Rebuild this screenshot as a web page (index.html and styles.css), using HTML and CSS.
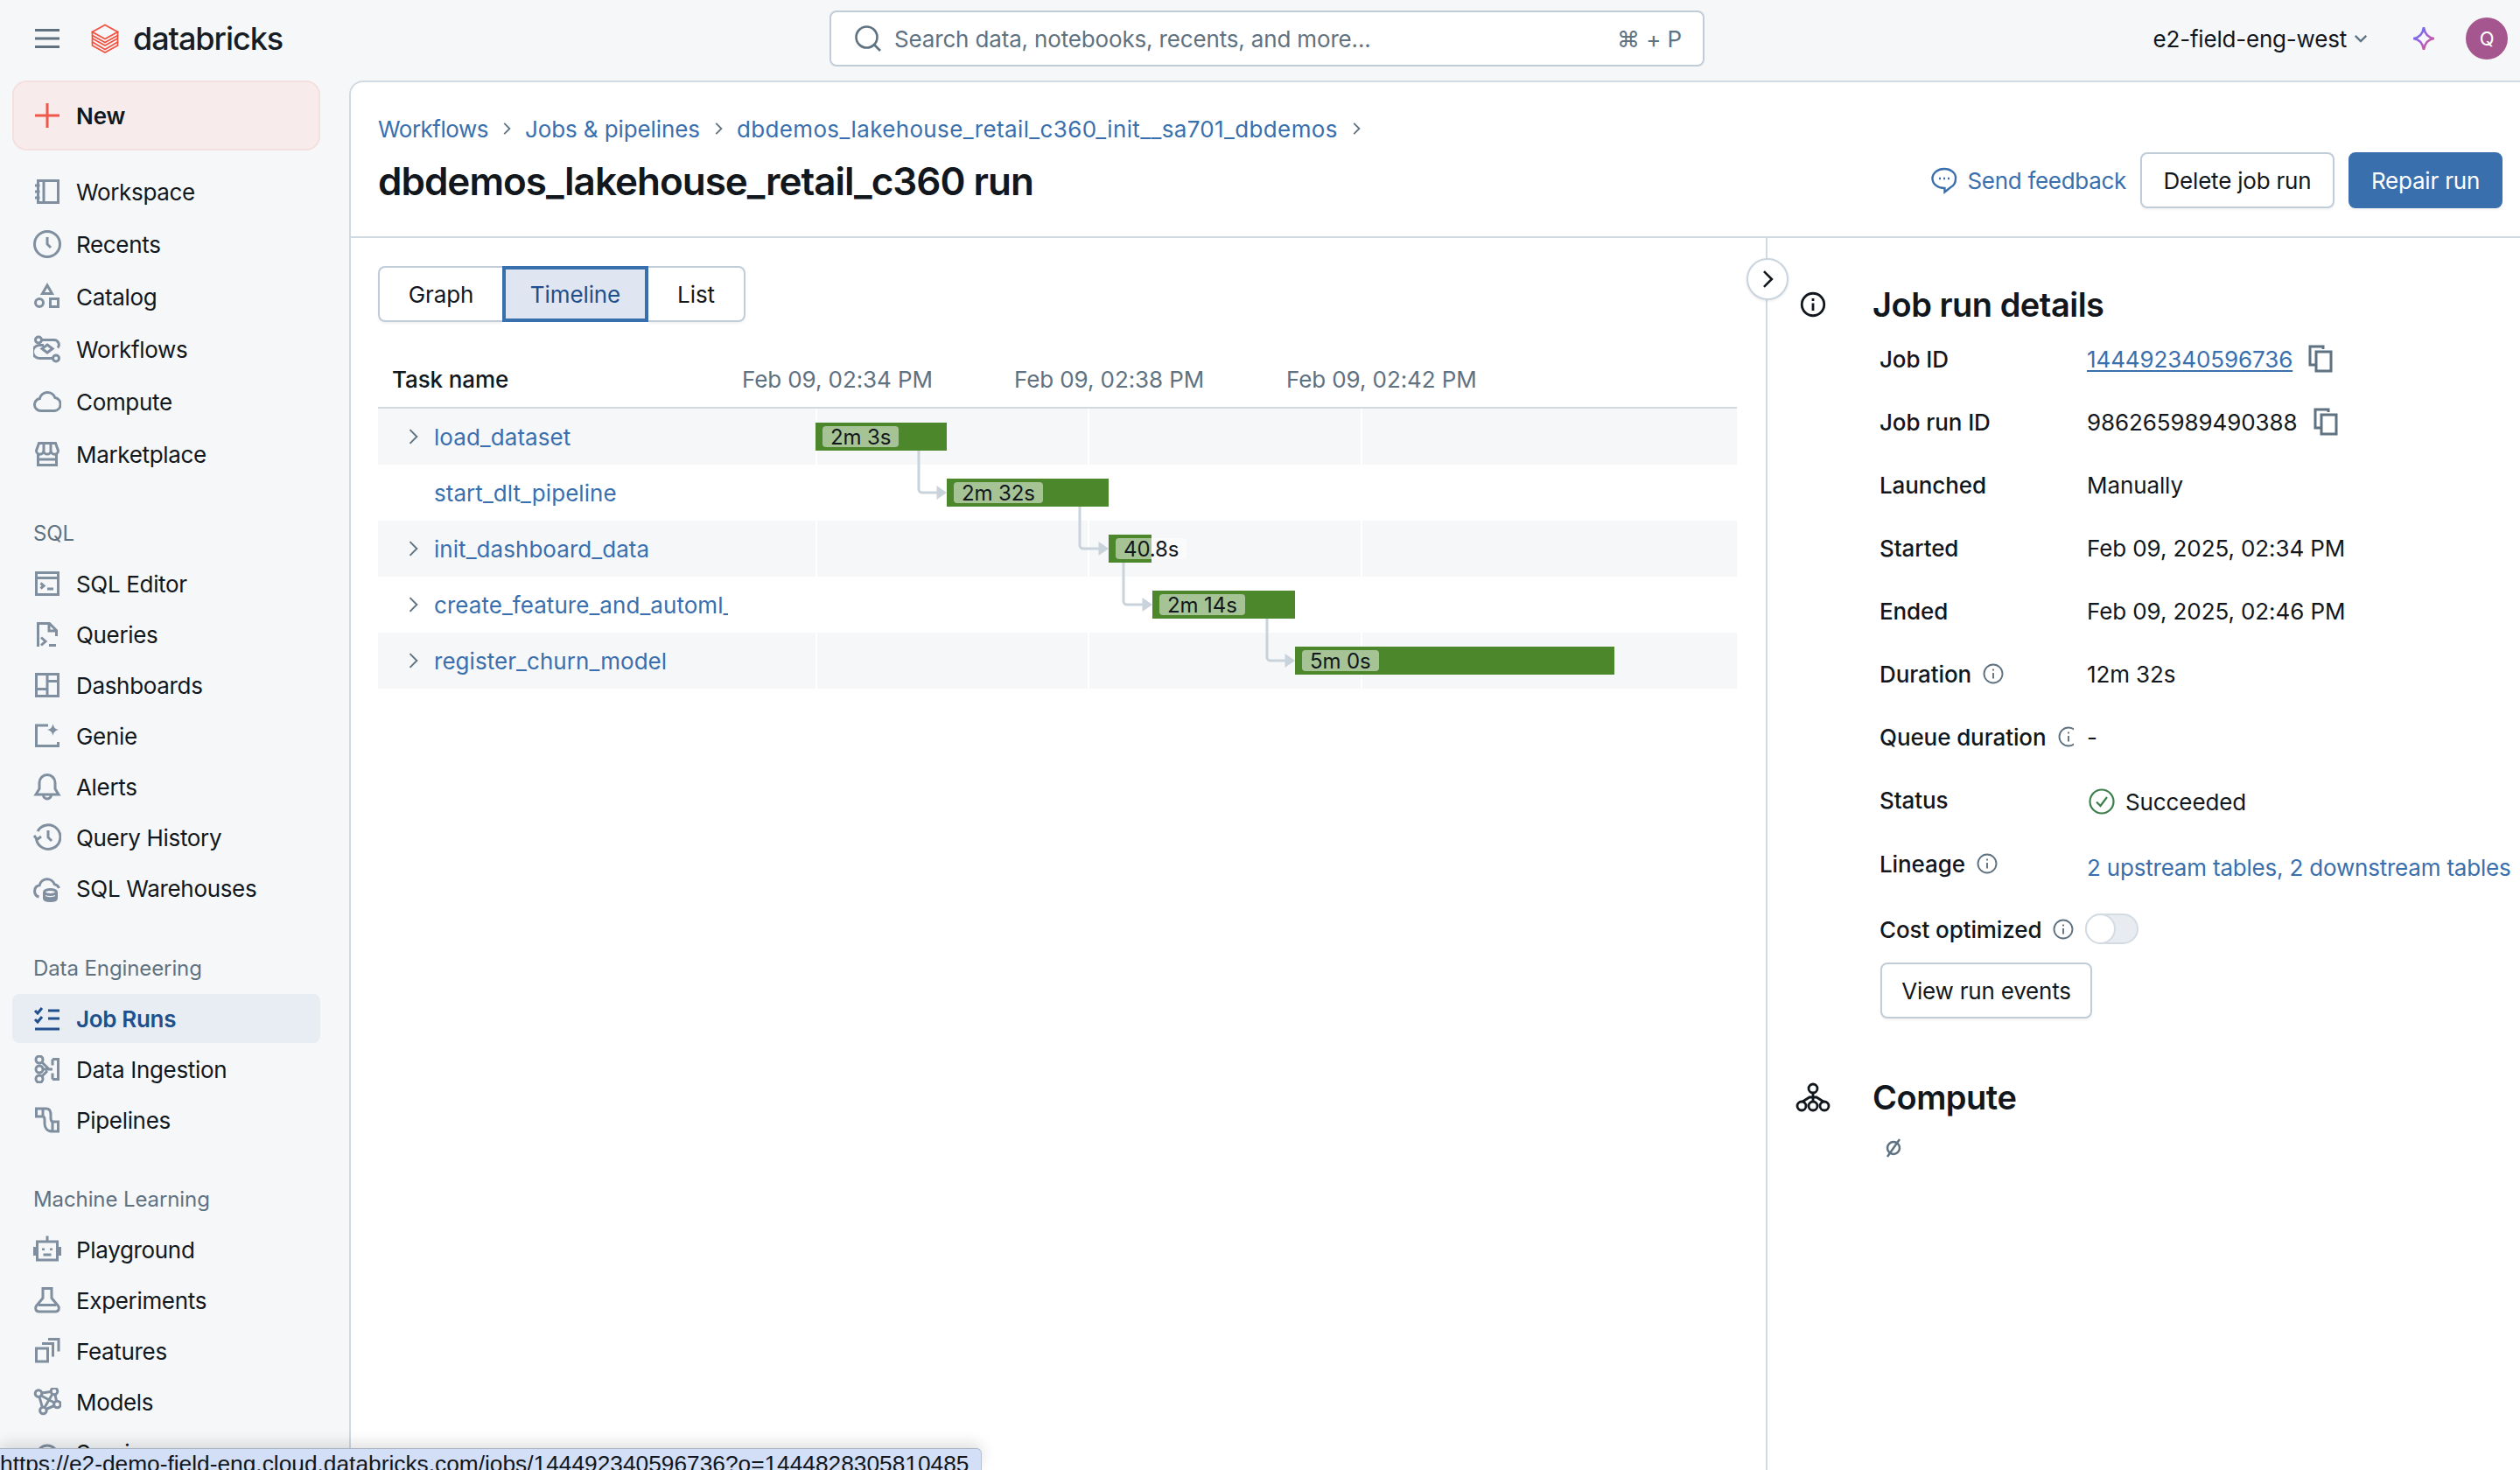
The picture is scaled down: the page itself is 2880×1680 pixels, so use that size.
FILE: index.html
```html
<!DOCTYPE html>
<html lang="en">
<head>
<meta charset="utf-8">
<title>dbdemos_lakehouse_retail_c360 run</title>
<link rel="stylesheet" href="styles.css">
</head>
<body>
<div class="app">
  <header class="topbar">
    <div class="brand">
      <svg class="burger" viewBox="0 0 28 22"><path d="M0 1.500h28M0 11h28M0 20.500h28"/></svg>
      <svg class="logo" viewBox="0 0 32 34"><path d="M16 1.500 30.500 9.500 16 17.500 1.500 9.500Z"/><path d="M1.500 9.500V13.500L16 21.500 30.500 13.500V9.500"/><path d="M1.500 17 16 25 30.500 17"/><path d="M1.500 13.500V21L16 29.500 30.500 21V13.500"/><path d="M1.500 21V25L16 33 30.500 25V21"/></svg>
      <span class="wordmark">databricks</span>
    </div>
    <div class="search">
      <svg class="search-ico" viewBox="0 0 16 16"><circle cx="7.250" cy="7.250" r="6"/><path d="M11.500 11.500 15 15"/></svg>
      <span class="search-text">Search data, notebooks, recents, and more...</span>
      <span class="search-key">⌘ + P</span>
    </div>
    <div class="account">
      <span class="ws">e2-field-eng-west</span>
      <svg class="ws-chev" viewBox="0 0 16 16"><path d="M3 5.500 8 10.500 13 5.500"/></svg>
      <svg class="spark" viewBox="0 0 28 28"><defs><linearGradient id="sg" x1="0" y1="0" x2="1" y2="1"><stop offset="0" stop-color="#4a7bf0"/><stop offset=".5" stop-color="#a45de0"/><stop offset="1" stop-color="#ee5a5a"/></linearGradient></defs><path d="M14 2c1 7 4 11 11 12-7 1-10 5-11 12-1-7-4-11-11-12 7-1 10-5 11-12Z"/></svg>
      <span class="avatar">Q</span>
    </div>
  </header>
  <div class="body">
    <nav class="sidebar">
      <a class="new-btn"><svg class="ico" viewBox="0 0 16 16"><path d="M8 1v14M1 8h14"/></svg><span>New</span></a>
      <div class="nav-group first">
        <a class="nav"><svg class="ico" viewBox="0 0 16 16"><path d="M2.750 1.750h11.500v12.500H2.750zM6 2v12M1 4.500h2.750M1 8h2.750M1 11.500h2.750"/></svg>Workspace</a>
        <a class="nav"><svg class="ico" viewBox="0 0 16 16"><circle cx="8" cy="8" r="7.250"/><path d="M8 4v4l2 2"/></svg>Recents</a>
        <a class="nav"><svg class="ico" viewBox="0 0 16 16"><path d="M8 1.500 10.750 6.250H5.250Z"/><circle cx="3.500" cy="11.500" r="2.250"/><path d="M9.750 9.250h4.500v4.500h-4.500z"/></svg>Catalog</a>
        <a class="nav"><svg class="ico" viewBox="0 0 16 16"><circle cx="3" cy="2.750" r="1.750"/><circle cx="13" cy="13.250" r="1.750"/><path d="M4.750 2.750h7a2.750 2.750 0 0 1 2.250 4.500M6 5.750H3.500a2.750 2.750 0 0 0 0 7.500h7.750"/><path d="M8 5.500 11 7.750 8 10 5 7.750Z"/></svg>Workflows</a>
        <a class="nav"><svg class="ico" viewBox="0 0 16 16"><path d="M4.250 13.250a3.500 3.500 0 0 1-.6-6.950 4.600 4.600 0 0 1 8.800-.55 3.800 3.800 0 0 1-.2 7.500z"/></svg>Compute</a>
        <a class="nav"><svg class="ico" viewBox="0 0 16 16"><path d="M1.750 6 3.250 1.750h9.500L14.250 6a2.100 2.100 0 0 1-4.200 0 2.050 2.050 0 0 1-4.100 0 2.100 2.100 0 0 1-4.200 0ZM6 2v4M10 2v4M2.750 7.500v6.750h10.500V7.500M2.750 11h10.500"/></svg>Marketplace</a>
      </div>
      <div class="nav-title sql-title">SQL</div>
      <div class="nav-group">
        <a class="nav"><svg class="ico" viewBox="0 0 16 16"><path d="M1.750 1.750h12.500v12.500H1.750zM2 4.750h12M4.250 7.750 6 9.250 4.250 10.750M8 11h3.500"/></svg>SQL Editor</a>
        <a class="nav"><svg class="ico" viewBox="0 0 16 16"><path d="M2.750 15V1.750h6.500l4 4V9M9 2v4h4M4.500 9.750 7 12l-2.500 2.250M9 14.250h4"/></svg>Queries</a>
        <a class="nav"><svg class="ico" viewBox="0 0 16 16"><path d="M1.750 1.750h12.500v12.500H1.750zM8 2v12M2 10.250h6M8 5.750h6"/></svg>Dashboards</a>
        <a class="nav"><svg class="ico" viewBox="0 0 16 16"><path d="M8.500 2H1.750v11.750h12.500V11.500"/><path class="solid" d="M11.250 1c.4 2.200 1.300 3.200 3.500 3.500-2.200.4-3.100 1.300-3.500 3.500-.4-2.200-1.300-3.100-3.500-3.500 2.200-.3 3.100-1.300 3.500-3.500Z"/></svg>Genie</a>
        <a class="nav"><svg class="ico" viewBox="0 0 16 16"><path d="M8 1.250A4.500 4.500 0 0 0 3.500 5.750v3.500L1.500 12.500h13l-2-3.250v-3.500A4.500 4.500 0 0 0 8 1.250ZM5.750 12.750a2.250 2.250 0 0 0 4.500 0"/></svg>Alerts</a>
        <a class="nav"><svg class="ico" viewBox="0 0 16 16"><path d="M2.500 4.500A6.900 6.900 0 1 1 1.750 9M.5 7 2.250 9.250 4.500 7.500M8.500 4v4l2 2"/></svg>Query History</a>
        <a class="nav"><svg class="ico" viewBox="0 0 16 16"><path d="M3.250 13a3.400 3.400 0 0 1 .3-6.600 4.500 4.500 0 0 1 8.600-.6 3.600 3.600 0 0 1 2.600 2.200"/><ellipse cx="9.750" cy="10.250" rx="3.500" ry="1.500"/><path d="M6.250 10.250v3.500c0 .9 1.600 1.500 3.500 1.500s3.500-.6 3.500-1.500v-3.500M6.250 12.500c0 .8 1.600 1.400 3.500 1.400s3.500-.6 3.500-1.400"/></svg>SQL Warehouses</a>
      </div>
      <div class="nav-title de-title">Data Engineering</div>
      <div class="nav-group">
        <a class="nav active"><svg class="ico" viewBox="0 0 16 16"><path d="M1 3.500 2.500 5 5 2M1 8.500 2.500 10 5 7M8.500 3.500H15M8.500 8H15M1 14h14"/></svg>Job Runs</a>
        <a class="nav"><svg class="ico" viewBox="0 0 16 16"><circle cx="3.500" cy="2.500" r="2"/><circle cx="3.500" cy="8" r="2"/><circle cx="3.500" cy="13.500" r="2"/><path d="M5 4 9 8M5 12l3-3M5.500 8H11M11 2.250h3.250v11.500H11M11 2.250v3.500M11 10.250v3.500"/></svg>Data Ingestion</a>
        <a class="nav"><svg class="ico" viewBox="0 0 16 16"><path d="M1.750 1.500H7.500C9.500 1.500 10 3 10 5v2c0 1 .5 2 1.500 2h2.750v5.500H11C8 14.500 6.500 12.500 6.500 10V8C6.500 6.500 6 6 5.500 6H1.750ZM5.500 1.500V6M11 9v5.500"/></svg>Pipelines</a>
      </div>
      <div class="nav-title ml-title">Machine Learning</div>
      <div class="nav-group">
        <a class="nav"><svg class="ico" viewBox="0 0 16 16"><path d="M2.250 3.500h11.500V14H2.250zM8 .25V3.500M.75 6.500v5M15.250 6.500v5M5.750 7.250V8.500M10.250 7.250V8.500M5.750 11h4.500"/></svg>Playground</a>
        <a class="nav"><svg class="ico" viewBox="0 0 16 16"><path d="M5.500 1.250h5v5.500l3.750 4.500c1 1.250.3 3.250-1.500 3.250H3.250c-1.800 0-2.500-2-1.500-3.250L5.500 6.750zM3 10.750h10"/></svg>Experiments</a>
        <a class="nav"><svg class="ico" viewBox="0 0 16 16"><path d="M1.750 6.500h6.500V14h-6.500zM5 3.750h6.250v7.500M8.500 1.250h6v7"/></svg>Features</a>
        <a class="nav"><svg class="ico" viewBox="0 0 16 16"><circle cx="3" cy="3.300" r="1.900"/><circle cx="12" cy="2" r="1.900"/><circle cx="13.700" cy="9.500" r="1.900"/><circle cx="5.700" cy="13" r="1.900"/><path d="M4.900 3 10.100 2.300M4.500 4.500 12 8.500M11 3.500 6.500 11.250M12.500 3.900 13.300 7.700M7.400 12.250 12 10.250M3.500 5.200 5.200 11.200"/></svg>Models</a>
        <a class="nav"><svg class="ico" viewBox="0 0 16 16"><path d="M2 10a6 6 0 0 1 12 0M1 12h14"/></svg>Serving</a>
      </div>
    </nav>
    <main class="card">
      <section class="page-head">
        <div class="crumbs">
          <a class="crumb-a">Workflows</a><svg class="crumb-chev" viewBox="0 0 16 16"><path d="M6 3.500 10.500 8 6 12.500"/></svg>
          <a>Jobs &amp; pipelines</a><svg class="crumb-chev" viewBox="0 0 16 16"><path d="M6 3.500 10.500 8 6 12.500"/></svg>
          <a class="crumb-long">dbdemos_lakehouse_retail_c360_init__sa701_dbdemos</a><svg class="crumb-chev" viewBox="0 0 16 16"><path d="M6 3.500 10.500 8 6 12.500"/></svg>
        </div>
        <div class="title-row">
          <h1>dbdemos_lakehouse_retail_c360 run</h1>
          <div class="actions">
            <a class="feedback"><svg class="fb-ico" viewBox="0 0 32 32"><path d="M16 3C8.500 3 2.500 7.800 2.500 14s6 11 13.500 11h.5v4.500l6.500-5.200c3.800-2 6-5.800 6-10.300C29.500 7.800 23.500 3 16 3Z"/><path class="dots" d="M10 14h2M15 14h2M20 14h2"/></svg>Send feedback</a>
            <button class="btn del">Delete job run</button>
            <button class="btn primary">Repair run</button>
          </div>
        </div>
      </section>
      <div class="split">
        <section class="left">
          <div class="segments">
            <span class="seg">Graph</span><span class="seg on">Timeline</span><span class="seg last">List</span>
          </div>
          <div class="gantt">
            <div class="gantt-head">
              <div class="name-col">Task name</div>
              <div class="ticks"><span>Feb 09, 02:34 PM</span><span>Feb 09, 02:38 PM</span><span>Feb 09, 02:42 PM</span></div>
            </div>
            <div class="gantt-rows">
              <div class="row odd">
                <div class="name"><svg class="row-chev" viewBox="0 0 16 16"><path d="M6 3.500 10.500 8 6 12.500"/></svg><a class="task">load_dataset</a></div>
                <div class="track"><div class="bar" style="margin-left:0;width:150px"><span class="pill">2m 3s</span></div></div>
              </div>
              <div class="row">
                <div class="name"><span class="row-gap"></span><a class="task">start_dlt_pipeline</a></div>
                <div class="track"><div class="bar" style="margin-left:150px;width:185px"><span class="pill">2m 32s</span></div></div>
              </div>
              <div class="row odd">
                <div class="name"><svg class="row-chev" viewBox="0 0 16 16"><path d="M6 3.500 10.500 8 6 12.500"/></svg><a class="task">init_dashboard_data</a></div>
                <div class="track"><div class="bar" style="margin-left:335px;width:49px"><span class="pill">40.8s</span></div></div>
              </div>
              <div class="row">
                <div class="name"><svg class="row-chev" viewBox="0 0 16 16"><path d="M6 3.500 10.500 8 6 12.500"/></svg><a class="task">create_feature_and_automl_run</a></div>
                <div class="track"><div class="bar" style="margin-left:385px;width:163px"><span class="pill">2m 14s</span></div></div>
              </div>
              <div class="row odd">
                <div class="name"><svg class="row-chev" viewBox="0 0 16 16"><path d="M6 3.500 10.500 8 6 12.500"/></svg><a class="task">register_churn_model</a></div>
                <div class="track"><div class="bar" style="margin-left:548px;width:365px"><span class="pill">5m 0s</span></div></div>
              </div>
              <svg class="links" viewBox="0 0 1054 320">
                <path class="line" d="M118 48V92a4 4 0 0 0 4 4H140"/><path class="head" d="M138.500 88 150 96 138.500 104Z"/>
                <path class="line" d="M302 112V156a4 4 0 0 0 4 4H324"/><path class="head" d="M323.500 152 335 160 323.500 168Z"/>
                <path class="line" d="M352 176V220a4 4 0 0 0 4 4H374"/><path class="head" d="M373.500 216 385 224 373.500 232Z"/>
                <path class="line" d="M516 240V284a4 4 0 0 0 4 4H537"/><path class="head" d="M536.500 280 548 288 536.500 296Z"/>
              </svg>
            </div>
          </div>
        </section>
        <aside class="right">
          <button class="collapse"><svg viewBox="0 0 16 16"><path d="M5.500 2.500 11 8 5.500 13.500"/></svg></button>
          <div class="panel-head">
            <svg class="head-ico" viewBox="0 0 30 30"><circle cx="15" cy="15" r="12.750"/><path d="M15 13.500V22M15 8v3"/></svg>
            <h2>Job run details</h2>
          </div>
          <dl class="details">
            <div class="d-row"><dt>Job ID</dt><dd><a class="u">144492340596736</a><svg class="copy" viewBox="0 0 28 32"><path d="M17 5V2H2v21h6"/><path d="M9 8h17v22H9z"/></svg></dd></div>
            <div class="d-row"><dt>Job run ID</dt><dd>986265989490388<svg class="copy" viewBox="0 0 28 32"><path d="M17 5V2H2v21h6"/><path d="M9 8h17v22H9z"/></svg></dd></div>
            <div class="d-row"><dt>Launched</dt><dd>Manually</dd></div>
            <div class="d-row"><dt>Started</dt><dd>Feb 09, 2025, 02:34 PM</dd></div>
            <div class="d-row"><dt>Ended</dt><dd>Feb 09, 2025, 02:46 PM</dd></div>
            <div class="d-row"><dt>Duration<svg class="info" viewBox="0 0 24 24"><circle cx="12" cy="12" r="10.500"/><path d="M12 11v6.500M12 6.500v2"/></svg></dt><dd>12m 32s</dd></div>
            <div class="d-row"><dt class="clip">Queue duration<svg class="info" viewBox="0 0 24 24"><circle cx="12" cy="12" r="10.500"/><path d="M12 11v6.500M12 6.500v2"/></svg></dt><dd>-</dd></div>
            <div class="d-row status"><dt>Status</dt><dd><svg class="ok" viewBox="0 0 30 30"><circle cx="15" cy="15" r="13.500"/><path d="M9 15.500 13.500 20 21 10"/></svg>Succeeded</dd></div>
            <div class="d-row lineage"><dt>Lineage<svg class="info" viewBox="0 0 24 24"><circle cx="12" cy="12" r="10.500"/><path d="M12 11v6.500M12 6.500v2"/></svg></dt><dd><a>2 upstream tables, 2 downstream tables</a></dd></div>
            <div class="d-row cost"><dt>Cost optimized<svg class="info" viewBox="0 0 24 24"><circle cx="12" cy="12" r="10.500"/><path d="M12 11v6.500M12 6.500v2"/></svg></dt><dd><span class="toggle"><span class="knob"></span></span></dd></div>
          </dl>
          <button class="btn events">View run events</button>
          <div class="panel-head compute">
            <svg class="head-ico cluster" viewBox="0 0 40 34"><circle cx="20" cy="7" r="5"/><circle cx="7" cy="27" r="5"/><circle cx="20" cy="27" r="5"/><circle cx="33" cy="27" r="5"/><path d="M20 12v10M8 22 16 17h8l8 5"/></svg>
            <h2>Compute</h2>
          </div>
          <svg class="blocked" viewBox="0 0 20 24"><circle cx="10" cy="12" r="7"/><path d="M17 2 3 22"/></svg>
        </aside>
      </div>
    </main>
  </div>
  <div class="status-url">https://e2-demo-field-eng.cloud.databricks.com/jobs/144492340596736?o=1444828305810485</div>
</div>
</body>
</html>
```
FILE: styles.css
```css
* { box-sizing: border-box; }
html, body { margin: 0; height: 100%; }
body { font-family: Inter, "Liberation Sans", sans-serif; font-size: 26px; letter-spacing: -0.1px; color: #11171c; background: #f6f7f9; overflow: hidden; }
a { color: inherit; text-decoration: none; }
svg { display: block; flex: none; }
.app { position: relative; width: 2880px; height: 1680px; overflow: hidden; display: flex; flex-direction: column; }

.topbar { height: 92px; flex: none; display: flex; align-items: center; position: relative; padding: 0 0 4px 40px; }
.brand { display: flex; align-items: center; width: 908px; }
.burger { width: 28px; height: 22px; stroke: #5f7281; stroke-width: 3; fill: none; }
.logo { width: 32px; height: 34px; margin-left: 36px; stroke: #f0523f; stroke-width: 1.700; fill: none; }
.wordmark { font-family: Inter, sans-serif; font-size: 36px; font-weight: 500; letter-spacing: -1.050px; margin-left: 16px; color: #161d24; }
.search { width: 1000px; height: 64px; background: #fff; border: 2px solid #c0cdd8; border-radius: 8px; display: flex; align-items: center; padding: 0 24px 0 26px; }
.search-ico { width: 32px; height: 32px; fill: none; stroke: #5f7281; stroke-width: 1.300; }
.search-text { margin-left: 14px; color: #5f7281; flex: 1; letter-spacing: -0.16px; }
.search-key { color: #5f7281; }
.account { margin-left: auto; display: flex; align-items: center; padding-right: 14px; }
.ws { font-size: 26px; letter-spacing: -0.2px; }
.ws-chev { width: 20px; height: 20px; fill: none; stroke: #5f7281; stroke-width: 1.800; margin-left: 6px; }
.spark { width: 30px; height: 30px; margin-left: 47px; fill: none; stroke: url(#sg); stroke-width: 2.400; }
.avatar { width: 48px; height: 48px; margin-left: 33px; border-radius: 50%; background: #a6568e; color: #fff; font-size: 22px; display: flex; align-items: center; justify-content: center; }

.body { flex: 1; display: flex; min-height: 0; }
.sidebar { width: 399px; flex: none; overflow: hidden; padding: 0 33px 0 14px; }
.ico { width: 32px; height: 32px; fill: none; stroke: currentColor; stroke-width: 1.500; }
.ico .solid { fill: currentColor; stroke: none; }
.new-btn { display: flex; align-items: center; gap: 17px; height: 80px; background: #f7ebeb; border: 2px solid #f6dfdf; border-radius: 16px; padding-left: 22px; font-weight: 600; color: #11171c; }
.new-btn .ico { color: #f0574a; }
.nav-group { display: flex; flex-direction: column; gap: 2px; }
.nav-group.first { margin-top: 19px; gap: 4px; }
.nav { height: 56px; display: flex; align-items: center; gap: 17px; padding-left: 24px; border-radius: 8px; flex: none; letter-spacing: -0.33px; }
.nav .ico { color: #7f8fa0; }
.nav.active { background: #e8edf4; color: #1f4f8c; font-weight: 600; }
.nav.active .ico { color: #1f4f8c; }
.nav-title { color: #5f7281; font-size: 24px; height: 56px; padding-left: 24px; display: flex; align-items: center; }
.sql-title { margin-top: 34px; margin-bottom: 2px; }
.de-title { margin-top: 35px; margin-bottom: 2px; }
.ml-title { margin-top: 34px; margin-bottom: 2px; }

.card { flex: 1; min-width: 0; background: #fff; border-top: 2px solid #d1d9e1; border-left: 2px solid #d1d9e1; border-top-left-radius: 16px; display: flex; flex-direction: column; }
.page-head { height: 178px; flex: none; border-bottom: 2px solid #d1d9e1; padding: 34px 20px 0 31px; }
.crumbs { display: flex; align-items: center; height: 38px; color: #3a6fae; }
.crumb-a { letter-spacing: -0.5px; }
.crumb-long { letter-spacing: 0.36px; }
.crumb-chev { width: 22px; height: 22px; fill: none; stroke: #5f7281; stroke-width: 1.300; margin: 0 10px; }
.title-row { display: flex; align-items: center; justify-content: space-between; margin-top: 8px; height: 64px; }
h1 { margin: 0; padding-top: 2px; font-size: 44px; font-weight: 600; letter-spacing: -1px; }
.actions { display: flex; align-items: center; gap: 16px; }
.feedback { display: flex; align-items: center; gap: 10px; color: #3a6fae; letter-spacing: -0.3px; }
.fb-ico { width: 32px; height: 32px; fill: none; stroke: #3a6fae; stroke-width: 2.400; }
.btn { height: 64px; background: #fff; border: 2px solid #c0cdd8; border-radius: 8px; font: inherit; letter-spacing: -0.2px; color: #11171c; padding: 0 26px; box-shadow: 0 2px 3px rgba(0,0,0,.05); }
.btn.del { width: 222px; padding: 0; }
.btn.primary { width: 176px; padding: 0; background: #3a6fae; border-color: #3a6fae; color: #fff; }

.split { flex: 1; min-height: 0; display: flex; }
.left { width: 1619px; flex: none; padding: 32px 33px 0 31px; border-right: 2px solid #d1d9e1; }
.segments { display: flex; height: 64px; }
.seg { display: flex; align-items: center; justify-content: center; width: 142px; border: 2px solid #c0cdd8; border-right: 0; border-radius: 8px 0 0 8px; box-shadow: 0 2px 3px rgba(0,0,0,.05); }
.seg.on { width: 167px; border: 4px solid #3a6fae; border-radius: 0; background: #dfe6f1; color: #1f4f8c; box-shadow: none; }
.seg.last { width: 111px; border: 2px solid #c0cdd8; border-left: 0; border-radius: 0 8px 8px 0; }
.gantt { margin-top: 34px; }
.gantt-head { display: flex; height: 65px; align-items: center; border-bottom: 2px solid #d1d9e1; }
.name-col { width: 416px; padding-left: 16px; font-weight: 500; flex: none; }
.ticks { display: flex; color: #5f7281; }
.ticks span { width: 311px; flex: none; }
.gantt-rows { position: relative; }
.row { display: flex; height: 64px; }
.row.odd { background: #f6f7f9; }
.name { width: 500px; flex: none; display: flex; align-items: center; padding-left: 26px; }
.row-chev { width: 28px; height: 28px; fill: none; stroke: #5f7281; stroke-width: 1.100; }
.row-gap { width: 28px; flex: none; }
.task { margin-left: 10px; width: 336px; overflow: hidden; white-space: nowrap; color: #3a6fae; letter-spacing: 0.05px; }
.track { flex: 1; padding-top: 16px; background: linear-gradient(#fff, #fff) 0 0 / 2px 100% no-repeat, linear-gradient(#fff, #fff) 311px 0 / 2px 100% no-repeat, linear-gradient(#fff, #fff) 623px 0 / 2px 100% no-repeat; }
.bar { height: 32px; background: #4c872c; position: relative; padding: 4px 0 0 8px; display: flex; align-items: flex-start; }
.pill { display: flex; flex: none; align-items: center; height: 24px; padding: 0 9px; background: rgba(255,255,255,.5); border-radius: 4px; font-size: 24px; white-space: nowrap; }
.links { position: absolute; left: 500px; top: 0; width: 1054px; height: 320px; pointer-events: none; }
.line { fill: none; stroke: #c8d3dc; stroke-width: 3; }
.head { fill: #c8d3dc; }

.right { position: relative; flex: 1; min-width: 0; overflow: visible; }
.collapse { position: absolute; left: -24px; top: 23px; width: 48px; height: 48px; border-radius: 50%; border: 2px solid #c9d4de; background: #fff; padding: 0; display: flex; align-items: center; justify-content: center; box-shadow: 0 1px 3px rgba(0,0,0,.1); }
.collapse svg { width: 26px; height: 26px; fill: none; stroke: #11171c; stroke-width: 1.600; }
.panel-head { display: flex; align-items: center; height: 56px; margin-top: 48px; position: relative; padding-left: 120px; }
.head-ico { position: absolute; left: 37px; top: 13px; width: 30px; height: 30px; fill: none; stroke: #11171c; stroke-width: 2.800; }
h2 { margin: 0; font-size: 38px; font-weight: 600; letter-spacing: -0.5px; }
.details { margin: -2px 0 0; padding-left: 128px; }
.d-row { display: flex; align-items: center; height: 72px; }
dt { width: 237px; flex: none; font-weight: 500; display: flex; align-items: center; gap: 13px; white-space: nowrap; }
dt.clip { overflow: hidden; width: 222px; margin-right: 15px; }
dd { margin: 0; display: flex; align-items: center; white-space: nowrap; }
.u { color: #3a6fae; text-decoration: underline; text-underline-offset: 3px; }
.copy { width: 28px; height: 32px; margin-left: 18px; fill: none; stroke: #5f7281; stroke-width: 3; }
.info { width: 24px; height: 24px; fill: none; stroke: #5f7281; stroke-width: 1.900; flex: none; }
.ok { width: 30px; height: 30px; fill: none; stroke: #3d7e4a; stroke-width: 2.200; margin-right: 12px; margin-left: 2px; }
.status dd { padding-top: 4px; }
.lineage { height: 74px; }
.lineage dd { padding-top: 8px; color: #3a6fae; letter-spacing: -0.2px; }
.cost { height: 76px; }
.cost dd { margin-left: -2px; }
.toggle { display: block; width: 61px; height: 35px; background: #e8ecf1; border: 2px solid #d3dbe3; border-radius: 18px; position: relative; margin-bottom: 2px; }
.knob { position: absolute; left: -2px; top: -2px; width: 35px; height: 35px; border-radius: 50%; background: #fff; border: 2px solid #d3dbe3; }
.events { display: block; margin: 0 0 0 129px; width: 242px; padding: 0; }
.compute { margin-top: 62px; }
.cluster { width: 40px; height: 34px; left: 32px; top: 11px; }
.blocked { width: 20px; height: 24px; fill: none; stroke: #5f7281; stroke-width: 2.500; margin: 18px 0 0 134px; }

.status-url { position: absolute; left: 0; bottom: 0; width: 1122px; height: 25px; background: #d3dff7; border-top: 1px solid #a9b3c2; border-top-right-radius: 6px; border-right: 1px solid #b6c0d0; font-family: "Liberation Sans", sans-serif; font-size: 26.300px; letter-spacing: 0; line-height: 34px; white-space: nowrap; overflow: hidden; color: #11171c; box-shadow: 0 -6px 16px rgba(0,0,0,.12); }
```
